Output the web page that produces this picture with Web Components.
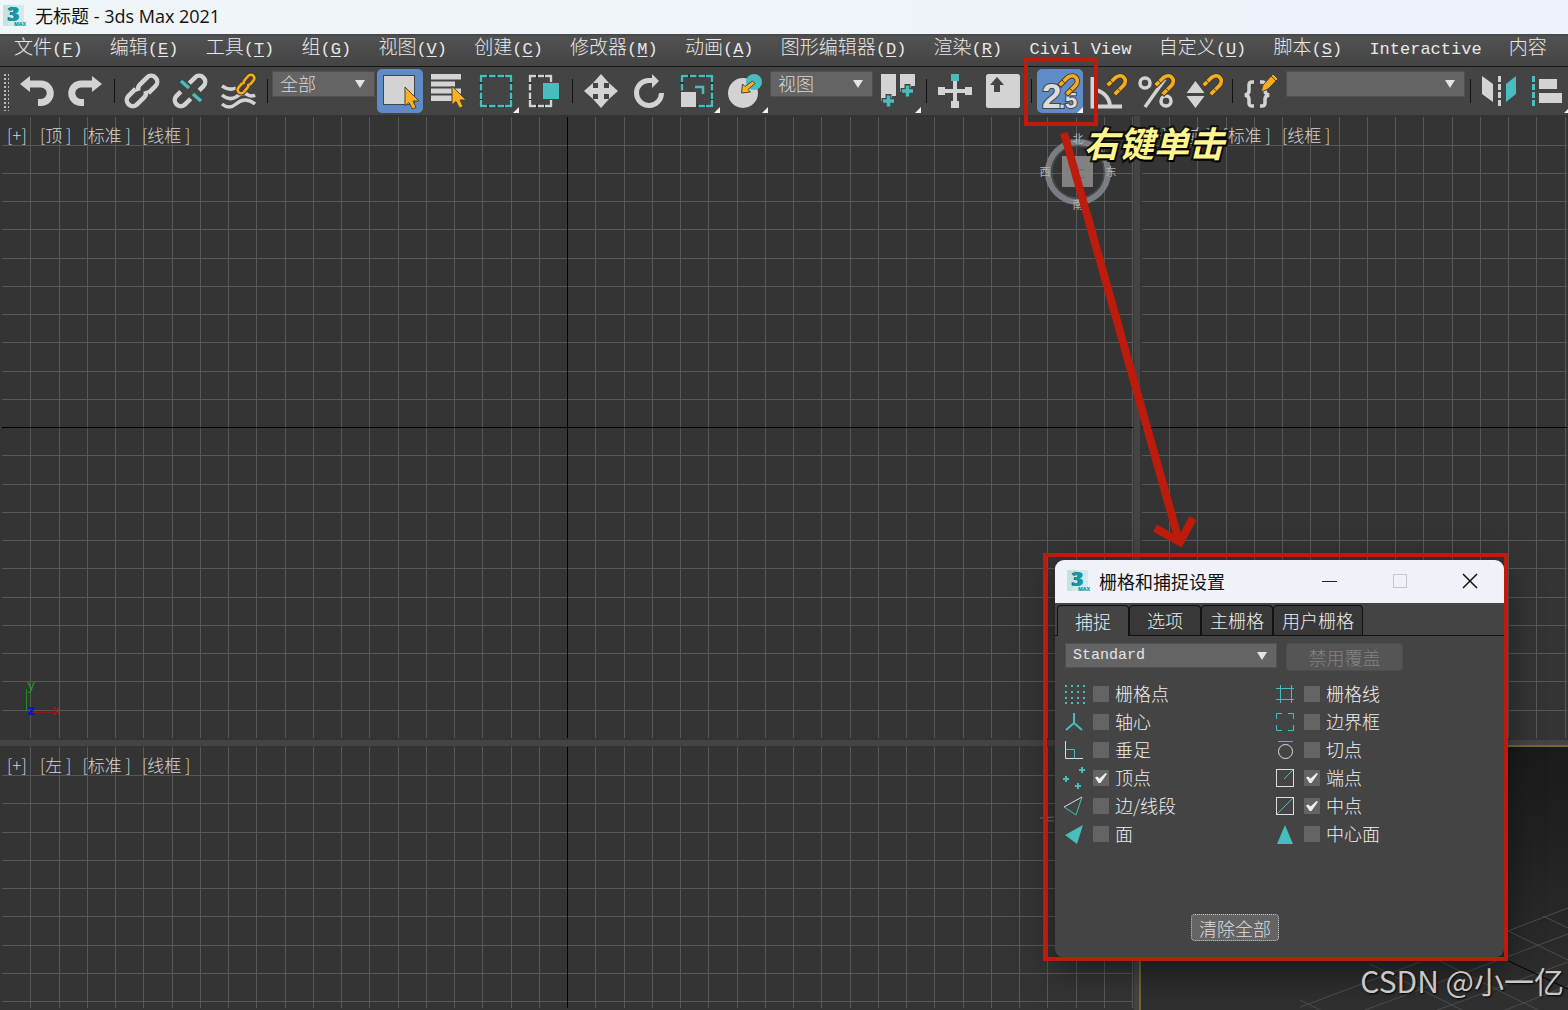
<!DOCTYPE html>
<html lang="zh-CN">
<head>
<meta charset="utf-8">
<title>无标题 - 3ds Max 2021</title>
<style>
html,body{margin:0;height:100%;overflow:hidden;background:#444}
body{font-family:"Noto Sans CJK SC",sans-serif;color:#ddd}
</style>
</head>
<body>
<max-app></max-app>
<script>
const define = (name, html, setup) => {
  const t = document.createElement('template');
  t.innerHTML = html;
  customElements.define(name, class extends HTMLElement {
    connectedCallback() {
      if (this.shadowRoot) return;
      this.attachShadow({mode: 'open'}).append(t.content.cloneNode(true));
      if (setup) setup(this, this.shadowRoot);
    }
  });
};

define('max-logo', `
<style>:host{display:block;width:24px;height:24px;flex:none}svg{display:block;overflow:visible}</style>
<svg width="24" height="24" viewBox="0 0 24 24" aria-hidden="true">
<rect x="1" y="1" width="21" height="21" fill="#d3ebed"/><path d="M1 1h10l-5 21h-5z" fill="#c3e2e4"/>
<text x="5" y="17" font-family="Open Sans,sans-serif" font-weight="800" font-size="20" fill="#0b5a66">3</text>
<text x="6" y="17" font-family="Open Sans,sans-serif" font-weight="800" font-size="20" fill="#179aa3">3</text>
<text x="12" y="22" font-family="Open Sans,sans-serif" font-weight="800" font-size="5" fill="#179aa3">MAX</text></svg>`);

define('title-bar', `
<style>:host{display:flex;align-items:center;gap:9px;box-sizing:border-box;height:34px;padding:0 0 3px 2px;background:linear-gradient(90deg,#f0f5f8,#edf2fb);color:#111}
h1{margin:0;font:400 18px/28px "Open Sans","Noto Sans CJK SC",sans-serif}</style>
<max-logo></max-logo><h1><slot></slot></h1>`);

define('menu-item', `
<style>:host{display:block;flex:none}
button{all:unset;font:300 19px "Noto Sans CJK SC",sans-serif;line-height:24px;color:#e8e8e8;white-space:nowrap}
.k{font:17px "Liberation Mono",monospace;line-height:20px}u{text-underline-offset:2px;text-decoration-thickness:1px}</style>
<button type="button"></button>`, (el, r) => {
  const b = r.querySelector('button'), key = el.getAttribute('key'), label = el.getAttribute('label');
  if (el.hasAttribute('latin')) b.innerHTML = `<span class="k">${label}</span>`;
  else b.innerHTML = label + (key ? `<span class="k">(<u>${key}</u>)</span>` : '');
});

define('menu-bar', `
<style>:host{display:block;background:linear-gradient(#454545,#515151 10%,#444);border-bottom:1px solid #161616}
nav{display:flex;justify-content:space-between;height:32px;padding:0 21px 0 14px}</style>
<nav><slot></slot></nav>`);

define('tool-separator', `
<style>:host{display:block;flex:none;width:1px;height:24px;margin:12px 4px;background:#111}</style>`);

/* icon library of the main toolbar, every icon on a 48 x 48 field */
const hook = 'M25 17L31 11C38 5 45 13 39 19L32 26';
const magnet = `<g fill="none"><path d="${hook}" stroke="#3f3a2c" stroke-width="5.500" stroke-linecap="square"/><path d="${hook}" stroke="#f9ac1b" stroke-width="3.700" stroke-linecap="square"/><path d="M26 13l3 3.500M33 21l3.500 3" stroke="#3f3a2c" stroke-width="1"/></g>`;
const cursor = (x, y) => `<path transform="translate(${x} ${y})" d="M0 0V19L4 15.500L7.500 22L11 20.500L8 14H14Z" fill="#fcb022" stroke="#4a4438" stroke-width="1"/>`;
const flyout = '<path d="M47 40v6h-6z" fill="#f2f2f2"/>';
const dash = (c, x, y, w, h) => `<rect x="${x}" y="${y}" width="${w}" height="${h}" fill="none" stroke="#333" stroke-width="4"/><path d="M${x} ${y+6}V${y}H${x+6}M${x+w-6} ${y}H${x+w}V${y+6}M${x+w} ${y+h-6}V${y+h}H${x+w-6}M${x+6} ${y+h}H${x}V${y+h-6}" fill="none" stroke="${c}" stroke-width="2.500"/>`
 + `<path d="M${x+8} ${y}H${x+w-7}M${x+8} ${y+h}H${x+w-7}M${x} ${y+8}V${y+h-7}M${x+w} ${y+8}V${y+h-7}" stroke="${c}" stroke-width="2.500" stroke-dasharray="6.500 2"/>`;
const chain = 'M-3-6H-13a6 6 0 0 0 0 12H-3a6 6 0 0 0 5.500-3.500M3 6H13a6 6 0 0 0 0-12H3a6 6 0 0 0-5.500 3.500';
const W = '#d3d3d3', T = '#48bdbd';
const icons = {
 undo: `<path d="M6 17L16 9V25Z" fill="${W}"/><path d="M15 17H27A9.250 9.250 0 0 1 27 35.500H24" fill="none" stroke="${W}" stroke-width="7"/>`,
 redo: `<path d="M40 17L30 9V25Z" fill="${W}"/><path d="M31 17H19A9.250 9.250 0 0 0 19 35.500H22" fill="none" stroke="${W}" stroke-width="7"/>`,
 link: `<g transform="translate(23 24) rotate(-45)" fill="none" stroke="${W}" stroke-width="4.500"><path d="${chain}"/></g>`,
 unlink: `<g transform="translate(23 24) rotate(-45)" fill="none" stroke="${W}" stroke-width="4.500"><path d="M-7-6H-13a6 6 0 0 0 0 12H-5M7 6H13a6 6 0 0 0 0-12H5"/></g><path d="M14 14l8 7M26 27l8 7" stroke="${T}" stroke-width="3.500"/>`,
 bind: `<g fill="none" stroke="${W}" stroke-width="3.500"><path d="M7 19q7 5 14 2"/><path d="M7 28q7 6 14 2 8-6 12-2 4 2 7 0"/><path d="M7 37q7 6 14 0 9-8 19 0"/></g><g transform="translate(31 17) rotate(-50) scale(.58)" fill="none"><path d="${chain}" stroke="#433a28" stroke-width="8"/><path d="${chain}" stroke="#f9ac1b" stroke-width="4.500"/></g>`,
 select: `<rect x="7.500" y="8.500" width="31" height="29" fill="${W}" stroke="#444"/>` + cursor(29, 20),
 byname: `<path d="M7 7h30v5.500H7zM7 14.500h24v5H7zM7 21.500h30v5H7zM7 28.500h21v5.500H7z" fill="${W}"/>` + cursor(28, 19),
 region: dash(T, 9, 9, 30, 30) + flyout,
 window: dash(W, 10, 9, 21, 30) + `<rect x="22.500" y="15.500" width="17" height="17" fill="${T}" stroke="#444"/>`,
 move: `<path d="M24 7l8 9h-5v5h5v-5l9 8-9 8v-5h-5v5h5l-8 9-8-9h5v-5h-5v5l-9-8 9-8v5h5v-5h-5z" fill="${W}"/>`,
 rotate: `<path d="M28 13.500H23A12.500 12.500 0 1 0 36.500 26" fill="none" stroke="${W}" stroke-width="5"/><path d="M27 7l7 7-7 7z" fill="${W}"/>`,
 scale: dash(T, 9, 9, 30, 30) + `<rect x="7.500" y="24.500" width="16" height="16" fill="${W}" stroke="#444"/><path d="M22 20h8v7" fill="none" stroke="${T}" stroke-width="2.500"/>` + flyout,
 place: `<circle cx="22" cy="26" r="15" fill="${W}"/><circle cx="33" cy="15" r="8" fill="${T}"/><path d="M31.500 14l2.500 2.500-7 6 2.500 2.500-9 1 1-9 2.500 2.500z" fill="#fcb022" stroke="#4a4438"/>` + flyout,
 pivot: `<path d="M7 7h15v22h-4v5H7zM26 7h15v12h-4v6H26z" fill="${W}"/><path d="M14.500 27v14M7.500 34h14M33.500 17v14M26.500 24h14" stroke="#444" stroke-width="6"/><path d="M14.500 28.500v11M9 34h11M33.500 18.500v11M28 24h11" stroke="${T}" stroke-width="3.500"/>` + flyout,
 manip: `<path d="M10 24h28M24 12v25" stroke="${W}" stroke-width="4"/><path d="M7 20h7v8H7zM34 20h7v8h-7zM20 34h8v7h-8z" fill="${W}"/><rect x="20" y="7" width="8" height="7" fill="${T}"/>`,
 keyboard: `<rect x="7" y="7" width="34" height="34" rx="2.500" fill="${W}"/><path d="M18 10l7 8h-4v7h-6v-7h-4z" fill="#444"/>`,
 snap: `<g font-family="Liberation Sans,sans-serif" font-weight="bold" fill="#dcdcdc" stroke="#444" stroke-width="2" paint-order="stroke"><text x="6" y="41" font-size="35">2</text><text x="23" y="41" font-size="22">.5</text></g>` + magnet + flyout,
 angle: `<path d="M8.500 10V39.500H38M9 23A17 17 0 0 1 26 39" fill="none" stroke="${W}" stroke-width="4"/>` + magnet,
 percent: `<g fill="none" stroke="${W}" stroke-width="3.500"><circle cx="13" cy="16" r="5"/><circle cx="34" cy="34" r="5"/><path d="M13 40L33 12"/></g>` + magnet,
 spinner: `<path d="M15.500 14l9 12h-18zM15.500 41l9-12h-18z" fill="${W}"/>` + magnet,
 braces: `<path d="M17 15h-2q-3 0-3 3v6q0 3-4 4 4 1 4 4v4q0 3 3 3h2M23 15h2q3 0 3 3v6q0 3 4 4-4 1-4 4v4q0 3-3 3h-2" fill="none" stroke="${W}" stroke-width="3.500"/><path d="M24 25l2-7 10-11 5 5-10 10z" fill="#f9ac1b" stroke="#444"/><path d="M34 9l5 5" stroke="#444"/>`,
 mirror: `<path d="M7 9l11 8v18L7 27z" fill="${W}"/><path d="M41 9l-10 8v18l10-8z" fill="${T}"/><path d="M24.500 9v30" stroke="${W}" stroke-width="3" stroke-dasharray="6 2"/>`,
 align: `<path d="M10.500 9v30" stroke="${T}" stroke-width="3" stroke-dasharray="6 2"/><path d="M16 12h18v10H16zM16 26h23v10H16z" fill="${W}"/>` + flyout
};
define('tool-button', `
<style>:host{display:block;flex:none;width:48px;height:48px}
button{all:unset;display:block;width:46px;height:44px;margin:2px 1px;border-radius:5px}
:host([active]) button{background:#5f8cc6}svg{display:block;margin:-2px -1px}</style>
<button type="button"></button>`, (el, r) => {
  const b = r.querySelector('button');
  b.setAttribute('aria-label', el.getAttribute('icon'));
  b.innerHTML = `<svg width="48" height="48" viewBox="0 0 48 48" aria-hidden="true">${icons[el.getAttribute('icon')]}</svg>`;
});

define('drop-down', `
<style>:host{display:grid;flex:none;height:24px;background:#646464;border:1px solid #505050;box-sizing:border-box}
select{all:unset;grid-area:1/1;min-width:0;padding:0 7px;font:300 18px/22px "Noto Sans CJK SC",sans-serif;color:#d8d8d8}
:host([latin]) select{font:15px/24px "Liberation Mono",monospace;color:#e4e4e4}
i{grid-area:1/1;justify-self:end;align-self:center;width:10px;height:8px;margin-right:9px;background:#e4e4e4;clip-path:polygon(0 0,100% 0,50% 100%);pointer-events:none}</style>
<select></select><i></i>`, (el, r) => {
  const s = r.querySelector('select');
  s.setAttribute('aria-label', el.getAttribute('name'));
  s.add(new Option(el.getAttribute('value')));
});

define('tool-bar', `
<style>:host{display:flex;height:48px;overflow:hidden;background:#444;border-bottom:1px solid #333}
.grip{flex:none;width:14px;height:38px;margin-top:6px;background:radial-gradient(circle,#bbb 1px,transparent 1px) 3px 0/4px 4px content-box;padding:0 5px 0 4px;box-sizing:border-box}
drop-down{margin:4px 1px 0 0;width:103px;height:26px}.ref{margin-left:1px}.sets{flex:1 0 179px;max-width:179px;margin-left:1px}</style>
<div class="grip"></div>
<tool-button icon="undo"></tool-button><tool-button icon="redo"></tool-button><tool-separator></tool-separator>
<tool-button icon="link"></tool-button><tool-button icon="unlink"></tool-button><tool-button icon="bind"></tool-button><tool-separator></tool-separator>
<drop-down name="选择过滤器" value="全部"></drop-down>
<tool-button icon="select" active></tool-button><tool-button icon="byname"></tool-button><tool-button icon="region"></tool-button><tool-button icon="window"></tool-button><tool-separator></tool-separator>
<tool-button icon="move"></tool-button><tool-button icon="rotate"></tool-button><tool-button icon="scale"></tool-button><tool-button icon="place"></tool-button>
<drop-down class="ref" name="参考坐标系" value="视图"></drop-down>
<tool-button icon="pivot"></tool-button><tool-separator></tool-separator>
<tool-button icon="manip"></tool-button><tool-button icon="keyboard"></tool-button><tool-separator></tool-separator>
<tool-button icon="snap" active></tool-button><tool-button icon="angle"></tool-button><tool-button icon="percent"></tool-button><tool-button icon="spinner"></tool-button><tool-separator></tool-separator>
<tool-button icon="braces"></tool-button>
<drop-down class="sets" name="命名选择集" value=""></drop-down><tool-separator></tool-separator>
<tool-button icon="mirror"></tool-button><tool-button icon="align"></tool-button>`);

define('view-port', `
<style>:host{display:grid;position:relative;overflow:hidden;background:#343434;min-width:0;min-height:0}
.grid{grid-area:1/1;width:calc(100% - 3px);height:calc(100% - 3px);margin:1px 1px 2px 2px}
header{grid-area:1/1;align-self:start;display:flex;gap:11px;padding:6px 7px}
button{all:unset;font:300 17px/26px "Noto Sans CJK SC",sans-serif;color:#d6d6d6;white-space:nowrap}
button:first-child{min-width:22px}</style>
<svg class="grid" shape-rendering="crispEdges" aria-hidden="true"></svg>
<header><button type="button">[+]</button><button type="button" class="v"></button><button type="button">[标准 ]</button><button type="button">[线框 ]</button></header>
<slot></slot>`, (el, r) => {
  const cx = +el.getAttribute('cx'), cy = +el.getAttribute('cy'), step = 28.25;
  let s = '';
  for (let i = -60; i <= 60; i++) {
    if (!i) continue;
    const x = Math.round(cx + i * step) - 1.5, y = Math.round(cy + i * step) - .5;
    if (x > 3) s += `<path d="M${x} 0V2000"/>`;
    if (y > 3 && i !== 11) s += `<path d="M0 ${y}H3000"/>`;
  }
  r.querySelector('.grid').innerHTML = `<g stroke="#585858" fill="none">${s}<path stroke="#000" d="M${cx - 1.5} 0V2000M0 ${cy - .5}H3000"/></g>`;
  r.querySelector('.v').textContent = `[${el.getAttribute('label')} ]`;
});

define('view-cube', `
<style>:host{position:absolute;top:16px;right:16px;opacity:.85}svg{display:block;overflow:visible}</style>
<svg width="80" height="80" viewBox="0 0 80 80" aria-hidden="true"><circle cx="40" cy="40" r="30" fill="none" stroke="#858a91" stroke-width="6"/><circle cx="40" cy="40" r="26" fill="none" stroke="#55595e" stroke-width="1"/>
<rect x="24" y="24" width="31" height="31" fill="#8f8f8f"/><g font-family="Noto Sans CJK SC,sans-serif" font-size="11" fill="#c8c8c8" text-anchor="middle"><text x="40" y="11">北</text><text x="7" y="44">西</text><text x="73" y="44">东</text><text x="40" y="77">南</text></g><text x="40" y="45" font-family="Noto Sans CJK SC,sans-serif" font-size="15" fill="#777" text-anchor="middle">上</text></svg>`);

define('cube-edge', `
<style>:host{position:absolute;top:68px;right:80px}svg{display:block}</style>
<svg width="14" height="10" viewBox="0 0 14 10" fill="none" stroke="#777" aria-hidden="true"><path d="M0 4l14-1M4 4l5 3h5"/></svg>`);

define('axis-tripod', `
<style>:host{position:absolute;left:24px;bottom:20px}svg{display:block;overflow:visible}</style>
<svg width="40" height="44" viewBox="0 0 40 44" aria-hidden="true"><path d="M2.500 13v22" stroke="#1a8f1a"/><path d="M11 36.500h18" stroke="#a01212" /><g font-family="DejaVu Sans,sans-serif" font-size="14"><text x="3" y="14" fill="#1a9a1a">y</text><text x="3" y="39" fill="#1212c0" font-weight="bold">z</text><text x="28" y="39" fill="#b01212">x</text></g></svg>`);

define('perspective-view', `
<style>:host{display:flex;justify-content:flex-end;align-items:flex-end;overflow:hidden;margin:-1px 0 0 -1px;border:solid #766834;border-width:2px 0 0 2px;background:linear-gradient(#1a1a1a,#222 40%,#303030)}svg{display:block}</style>
<svg width="268" height="108" viewBox="1300 902 268 108" fill="none" stroke="#4d4d4d" aria-hidden="true"><path d="M1568 908L1500 934M1568 934L1360 1012M1568 962L1432 1012M1568 986L1500 1012M1420 962L1290 1011M1500 927L1568 960M1543 916L1568 928M1440 961L1540 1011M1370 964L1464 1011M1300 1000L1322 1011"/><path d="M1500 957L1568 989" stroke="#000"/></svg>`);

/* snap option glyphs on a 22 x 22 field */
const glyphs = {
 gridpt: `<path d="M2 3h20M2 9h20M2 15h20M2 20h20" stroke="${T}" stroke-width="2" stroke-dasharray="2 4"/>`,
 gridln: `<path d="M6.500 2v18M17.500 2v18M2 5.500h18M2 16.500h18" stroke="${T}"/>`,
 pivot: `<path d="M11 2v10l-8 7M11 12l8 7" stroke="${T}" stroke-width="2"/>`,
 bbox: `<path d="M2.500 8V2.500H8M14 2.500h5.500V8M19.500 14v5.500H14M8 19.500H2.500V14" stroke="${T}"/>`,
 perp: `<path d="M2.500 2v17.500H20" stroke="#ddd"/><path d="M2.500 10.500h9v9" stroke="${T}"/>`,
 tangent: `<path d="M4 2.500h15" stroke="${T}"/><circle cx="11.500" cy="12.500" r="7" stroke="#ddd"/>`,
 vertex: `<path d="M19 0v6M16 3h6M3 9v6M0 12h6M15 16v6M12 19h6" stroke="${T}" stroke-width="2"/>`,
 endpt: `<rect x="2.500" y="2.500" width="17" height="17" stroke="#ddd"/><path d="M10 12l9-9" stroke="${T}"/>`,
 edge: `<path d="M1 12l12 8L19 2" stroke="${T}"/><path d="M1 12L19 2" stroke="#ddd"/>`,
 midpt: `<rect x="2.500" y="2.500" width="17" height="17" stroke="#ddd"/><path d="M3 19L19 3" stroke="${T}"/>`,
 face: `<path d="M2 12L20 2L14 21Z" fill="${T}"/>`,
 center: `<path d="M11 2l8 19H3z" fill="${T}"/>`
};
define('snap-option', `
<style>:host{display:block}label{display:flex;align-items:center;height:28px;font:300 18px/26px "Noto Sans CJK SC",sans-serif;color:#eee;white-space:nowrap}
svg{flex:none;margin-right:8px}span{padding-bottom:3px}
input{appearance:none;display:grid;place-items:center;flex:none;width:16px;height:16px;margin:0 6px 0 0;background:#646464}
input:checked::before{content:"";width:12px;height:10px;background:#eee;clip-path:polygon(0 46%,18% 36%,38% 56%,88% 0,100% 8%,46% 100%,30% 100%)}</style>
<label><svg width="22" height="22" viewBox="0 0 22 22" fill="none" aria-hidden="true"></svg><input type="checkbox"><span><slot></slot></span></label>`, (el, r) => {
  r.querySelector('svg').innerHTML = glyphs[el.getAttribute('icon')];
  r.querySelector('input').checked = el.hasAttribute('checked');
});

define('snap-dialog', `
<style>:host{display:flex;flex-direction:column;background:#444;border-radius:9px 9px 8px 8px;overflow:hidden;box-shadow:0 12px 36px rgba(0,0,0,.5)}
header{display:flex;align-items:center;box-sizing:border-box;height:43px;padding:0 26px 2px 11px;background:#eff3f9;color:#111}
h2{flex:1;margin:0 0 0 9px;font:18px/26px "Noto Sans CJK SC",sans-serif}
.win{all:unset;display:block;width:16px;height:16px;margin-left:54px}.win svg{display:block}
nav{display:flex;align-items:flex-end;padding:2px 0 0 2px;border-bottom:1px solid #111}
nav button{all:unset;box-sizing:border-box;width:72px;height:30px;text-align:center;background:#383838;border:1px solid #111;border-bottom:0;border-radius:4px 4px 0 0;font:300 18px/25px "Noto Sans CJK SC",sans-serif;color:#eee}
nav button:first-child{background:#444;height:31px;margin-bottom:-1px}nav button:last-child{width:90px}
.top{display:flex;gap:9px;padding:7px 10px 0}.top drop-down{width:212px;height:25px}
.b{all:unset;box-sizing:border-box;text-align:center;border-radius:4px;font:300 18px/22px "Noto Sans CJK SC",sans-serif}
.off{width:117px;height:28px;background:#555;border:1px solid #4e4e4e;color:#828282}
.list{display:grid;grid-template-columns:211px 1fr;padding:9px 8px 0}
footer{margin-top:auto;padding:0 0 16px 136px}
.clear{width:88px;height:27px;background:#646464;border:1px dotted #c8c8c8;color:#ddd}</style>
<header><max-logo></max-logo><h2>栅格和捕捉设置</h2>
<button class="win" type="button" aria-label="最小化"><svg width="16" height="16"><path d="M0 8.500h15" stroke="#222"/></svg></button>
<button class="win" type="button" aria-label="最大化"><svg width="16" height="16"><rect x="1.500" y="1.500" width="13" height="13" fill="none" stroke="#c4c7cb"/></svg></button>
<button class="win" type="button" aria-label="关闭"><svg width="16" height="16"><path d="M1 1l14 14M15 1L1 15" stroke="#111" stroke-width="1.500"/></svg></button></header>
<nav><button type="button">捕捉</button><button type="button">选项</button><button type="button">主栅格</button><button type="button">用户栅格</button></nav>
<div class="top"><drop-down latin name="捕捉类型" value="Standard"></drop-down><button class="b off" type="button" disabled>禁用覆盖</button></div>
<div class="list">
<snap-option icon="gridpt">栅格点</snap-option><snap-option icon="gridln">栅格线</snap-option>
<snap-option icon="pivot">轴心</snap-option><snap-option icon="bbox">边界框</snap-option>
<snap-option icon="perp">垂足</snap-option><snap-option icon="tangent">切点</snap-option>
<snap-option icon="vertex" checked>顶点</snap-option><snap-option icon="endpt" checked>端点</snap-option>
<snap-option icon="edge">边/线段</snap-option><snap-option icon="midpt" checked>中点</snap-option>
<snap-option icon="face">面</snap-option><snap-option icon="center">中心面</snap-option>
</div>
<footer><button class="b clear" type="button">清除全部</button></footer>`);

define('call-out', `
<style>:host{display:block;position:absolute;inset:0;pointer-events:none}
.snap,.dlg,svg,p{position:absolute}
.snap{left:1024px;top:58px;width:66px;height:60px;border:4px solid #bd1b0b}
.dlg{left:1043px;top:553px;width:457px;height:400px;border:4px solid #bd1b0b}
svg{left:1040px;top:120px}
p{left:1084px;top:120px;margin:0;font:italic 700 35px/44px "Noto Sans CJK SC",sans-serif;color:#fff68f;-webkit-text-stroke:4px #111;paint-order:stroke fill;text-shadow:1px 2px 1px #000;white-space:nowrap}</style>
<div class="snap"></div><div class="dlg"></div>
<svg width="170" height="440" viewBox="1040 120 170 440" fill="none" stroke="#bd1b0b" aria-hidden="true"><path d="M1064 133L1179 541" stroke-width="8"/><path d="M1155 528L1180 542L1193 518" stroke-width="8"/></svg>
<p>右键单击</p>`);

define('max-app', `
<style>:host{display:flex;flex-direction:column;position:relative;height:100vh}
main{flex:1;display:grid;grid-template:624fr 264fr/1134fr 428fr;gap:6px;background:#444;min-height:0}
snap-dialog{position:absolute;left:1055px;top:560px;width:449px;height:397px}
.mark{position:absolute;right:4px;bottom:8px;margin:0;font:400 30px/44px "Noto Sans CJK SC",sans-serif;color:#c8c8c8;text-shadow:1px 1px 2px #000}</style>
<title-bar>无标题 - 3ds Max 2021</title-bar>
<menu-bar><menu-item label="文件" key="F"></menu-item><menu-item label="编辑" key="E"></menu-item><menu-item label="工具" key="T"></menu-item><menu-item label="组" key="G"></menu-item><menu-item label="视图" key="V"></menu-item><menu-item label="创建" key="C"></menu-item><menu-item label="修改器" key="M"></menu-item><menu-item label="动画" key="A"></menu-item><menu-item label="图形编辑器" key="D"></menu-item><menu-item label="渲染" key="R"></menu-item><menu-item label="Civil View" latin></menu-item><menu-item label="自定义" key="U"></menu-item><menu-item label="脚本" key="S"></menu-item><menu-item label="Interactive" latin></menu-item><menu-item label="内容"></menu-item></menu-bar>
<tool-bar></tool-bar>
<main>
<view-port label="顶" cx="567" cy="311"><view-cube></view-cube><axis-tripod></axis-tripod></view-port>
<view-port label="前" cx="594" cy="311"></view-port>
<view-port label="左" cx="567" cy="594"><cube-edge></cube-edge></view-port>
<perspective-view></perspective-view>
</main>
<snap-dialog></snap-dialog>
<p class="mark">CSDN @小一亿</p>
<call-out></call-out>`);
</script>
</body>
</html>
